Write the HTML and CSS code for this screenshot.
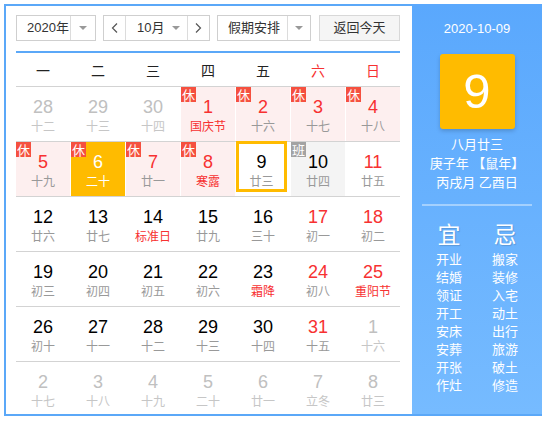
FILE: index.html
```html
<!DOCTYPE html>
<html lang="zh">
<head>
<meta charset="utf-8">
<title>万年历</title>
<link rel="stylesheet" href="styles.css">
</head>
<body>
<div class="cal">
  <div class="main">
    <div class="bar">
      <div class="sel year"><span class="txt">2020年</span><span class="arr"><i class="tri"></i></span></div>
      <div class="sel month">
        <span class="nav"><svg width="7" height="10" viewBox="0 0 7 10"><polyline points="6,0.5 1.5,5 6,9.5" fill="none" stroke="#555" stroke-width="1.2"/></svg></span>
        <span class="mid"><span class="mtxt">10月</span><i class="tri"></i></span>
        <span class="nav"><svg width="7" height="10" viewBox="0 0 7 10"><polyline points="1,0.5 5.5,5 1,9.5" fill="none" stroke="#555" stroke-width="1.2"/></svg></span>
      </div>
      <div class="sel hol"><span class="txt">假期安排</span><span class="arr"><i class="tri"></i></span></div>
      <div class="today">返回今天</div>
    </div>
    <div class="week">
      <span>一</span><span>二</span><span>三</span><span>四</span><span>五</span><span class="we">六</span><span class="we">日</span>
    </div>
    <div class="rows">
      <div class="row">
        <div class="cell other"><b>28</b><em>十二</em></div>
        <div class="cell other"><b>29</b><em>十三</em></div>
        <div class="cell other"><b>30</b><em>十四</em></div>
        <div class="cell rest"><i class="badge">休</i><b>1</b><em class="fest">国庆节</em></div>
        <div class="cell rest"><i class="badge">休</i><b>2</b><em>十六</em></div>
        <div class="cell rest"><i class="badge">休</i><b>3</b><em>十七</em></div>
        <div class="cell rest"><i class="badge">休</i><b>4</b><em>十八</em></div>
      </div>
      <div class="row">
        <div class="cell rest"><i class="badge">休</i><b>5</b><em>十九</em></div>
        <div class="cell today-cell"><i class="badge">休</i><b>6</b><em>二十</em></div>
        <div class="cell rest"><i class="badge">休</i><b>7</b><em>廿一</em></div>
        <div class="cell rest"><i class="badge">休</i><b>8</b><em class="fest">寒露</em></div>
        <div class="cell picked"><b>9</b><em>廿三</em></div>
        <div class="cell work"><i class="badge grey">班</i><b>10</b><em>廿四</em></div>
        <div class="cell red"><b>11</b><em>廿五</em></div>
      </div>
      <div class="row">
        <div class="cell"><b>12</b><em>廿六</em></div>
        <div class="cell"><b>13</b><em>廿七</em></div>
        <div class="cell"><b>14</b><em class="fest">标准日</em></div>
        <div class="cell"><b>15</b><em>廿九</em></div>
        <div class="cell"><b>16</b><em>三十</em></div>
        <div class="cell red"><b>17</b><em>初一</em></div>
        <div class="cell red"><b>18</b><em>初二</em></div>
      </div>
      <div class="row">
        <div class="cell"><b>19</b><em>初三</em></div>
        <div class="cell"><b>20</b><em>初四</em></div>
        <div class="cell"><b>21</b><em>初五</em></div>
        <div class="cell"><b>22</b><em>初六</em></div>
        <div class="cell"><b>23</b><em class="fest">霜降</em></div>
        <div class="cell red"><b>24</b><em>初八</em></div>
        <div class="cell red"><b>25</b><em class="fest">重阳节</em></div>
      </div>
      <div class="row">
        <div class="cell"><b>26</b><em>初十</em></div>
        <div class="cell"><b>27</b><em>十一</em></div>
        <div class="cell"><b>28</b><em>十二</em></div>
        <div class="cell"><b>29</b><em>十三</em></div>
        <div class="cell"><b>30</b><em>十四</em></div>
        <div class="cell red"><b>31</b><em>十五</em></div>
        <div class="cell other"><b>1</b><em>十六</em></div>
      </div>
      <div class="row">
        <div class="cell other"><b>2</b><em>十七</em></div>
        <div class="cell other"><b>3</b><em>十八</em></div>
        <div class="cell other"><b>4</b><em>十九</em></div>
        <div class="cell other"><b>5</b><em>二十</em></div>
        <div class="cell other"><b>6</b><em>廿一</em></div>
        <div class="cell other"><b>7</b><em>立冬</em></div>
        <div class="cell other"><b>8</b><em>廿三</em></div>
      </div>
    </div>
  </div>
  <div class="side">
    <div class="date">2020-10-09</div>
    <div class="bigday">9</div>
    <div class="lunar">
      <div>八月廿三</div>
      <div>庚子年 【鼠年】</div>
      <div>丙戌月 乙酉日</div>
    </div>
    <div class="sep"></div>
    <div class="yiji">
      <div class="col">
        <div class="head">宜</div>
        <div>开业</div><div>结婚</div><div>领证</div><div>开工</div><div>安床</div><div>安葬</div><div>开张</div><div>作灶</div>
      </div>
      <div class="col">
        <div class="head">忌</div>
        <div>搬家</div><div>装修</div><div>入宅</div><div>动土</div><div>出行</div><div>旅游</div><div>破土</div><div>修造</div>
      </div>
    </div>
  </div>
</div>
</body>
</html>
```
FILE: styles.css
```css
body {
  margin: 0;
  background: #fff;
  font-family: "Liberation Sans", Arial, "Noto Sans CJK SC", sans-serif;
}
.cal {
  margin: 4px 0 0 4px;
  width: 538px;
  height: 412px;
  box-sizing: border-box;
  border: 2px solid #5ba8f8;
  display: flex;
}
.main {
  width: 406px;
  padding: 9px 12px 0 10px;
  box-sizing: border-box;
  overflow: hidden;
}
.bar {
  display: flex;
  height: 26px;
}
.sel {
  display: flex;
  height: 26px;
  box-sizing: border-box;
  border: 1px solid #cfcfcf;
  font-size: 13px;
  color: #333;
  line-height: 24px;
  white-space: nowrap;
}
.year { width: 80px; }
.year .txt { width: 54px; padding-left: 10px; box-sizing: border-box; border-right: 1px solid #dcdcdc; }
.arr { flex: 1; display: flex; align-items: center; justify-content: center; }
.tri {
  display: block;
  width: 0;
  height: 0;
  border-left: 4px solid transparent;
  border-right: 4px solid transparent;
  border-top: 4px solid #999;
}
.month { width: 107px; margin-left: 7px; }
.nav {
  width: 22px;
  display: flex;
  align-items: center;
  justify-content: center;
}
.nav:first-child { border-right: 1px solid #dcdcdc; }
.mid {
  width: 62px;
  display: flex;
  align-items: center;
  border-right: 1px solid #dcdcdc;
  box-sizing: border-box;
  flex: none;
}
.mtxt { padding-left: 11px; white-space: nowrap; margin-right: 8px; }
.hol { width: 94px; margin-left: 7px; }
.hol .txt { width: 70px; padding-left: 10px; box-sizing: border-box; border-right: 1px solid #dcdcdc; }
.today {
  width: 81px;
  margin-left: 8px;
  height: 26px;
  box-sizing: border-box;
  border: 1px solid #d8d8d8;
  background: #f5f5f5;
  font-size: 13px;
  color: #333;
  line-height: 24px;
  text-align: center;
}
.week {
  margin-top: 10px;
  border-top: 2px solid #5ba8f8;
  height: 33px;
  display: grid;
  grid-template-columns: repeat(7, 54px);
  column-gap: 1px;
  align-items: center;
  text-align: center;
  font-size: 14px;
  color: #222;
  font-family: "Noto Sans CJK SC", sans-serif;
}
.week .we { color: #f73131; }
.row {
  border-top: 1px solid #d3d3d3;
  height: 54px;
  display: grid;
  grid-template-columns: repeat(7, 54px);
  column-gap: 1px;
}
.cell {
  position: relative;
  height: 54px;
  box-sizing: border-box;
  padding-top: 9px;
  text-align: center;
}
.cell b {
  display: block;
  font-weight: normal;
  font-size: 18px;
  line-height: 22px;
  color: #000;
}
.cell em {
  display: block;
  font-style: normal;
  font-size: 12px;
  line-height: 16px;
  color: #999;
  font-family: "Noto Sans CJK SC", sans-serif;
}
.cell em.fest { color: #f73131; }
.cell.red b { color: #f73131; }
.cell.rest { background: #fdefef; }
.cell.rest b { color: #f73131; }
.cell.other b { color: #c0c0c0; }
.cell.other em { color: #c6c6c6; }
.cell.work { background: #f4f4f4; }
.cell.today-cell { background: #ffbb00; }
.cell.today-cell b, .cell.today-cell em { color: #fff; }
.cell.picked {
  width: 51px;
  height: 51px;
  margin-top: -1px;
  border: 3px solid #ffbb00;
  padding-top: 7px;
}
.badge {
  position: absolute;
  left: 0;
  top: 0;
  width: 15px;
  height: 15px;
  background: #f5503f;
  color: #fff;
  font-style: normal;
  font-size: 13px;
  line-height: 15px;
  text-align: center;
  font-family: "Noto Sans CJK SC", sans-serif;
}
.badge.grey { background: #a3a3a3; }
.side {
  width: 130px;
  margin: -2px -2px 0 0;
  background: linear-gradient(#5aa8fd, #76bbff);
  color: #fff;
  display: flex;
  flex-direction: column;
  align-items: center;
  font-family: "Liberation Sans", Arial, "Noto Sans CJK SC", sans-serif;
}
.date {
  margin-top: 17px;
  font-size: 13px;
  line-height: 16px;
}
.bigday {
  margin-top: 17px;
  width: 75px;
  height: 75px;
  border-radius: 3px;
  background: #ffbb00;
  box-shadow: 0 2px 4px rgba(0, 0, 0, 0.18);
  font-size: 49px;
  line-height: 75px;
  text-align: center;
}
.lunar {
  margin-top: 6px;
  font-size: 13px;
  line-height: 19px;
  text-align: center;
}
.sep {
  margin-top: 12px;
  width: 110px;
  height: 2px;
  background: rgba(255, 255, 255, 0.4);
}
.yiji {
  margin-top: 13px;
  display: flex;
  font-size: 13px;
  line-height: 18px;
  font-family: "Noto Sans CJK SC", sans-serif;
}
.col {
  width: 56px;
  text-align: center;
}
.col .head {
  font-size: 23px;
  line-height: 28px;
  margin-bottom: 3px;
  text-shadow: 1px 1px 1px rgba(0, 0, 0, 0.15);
}
```
